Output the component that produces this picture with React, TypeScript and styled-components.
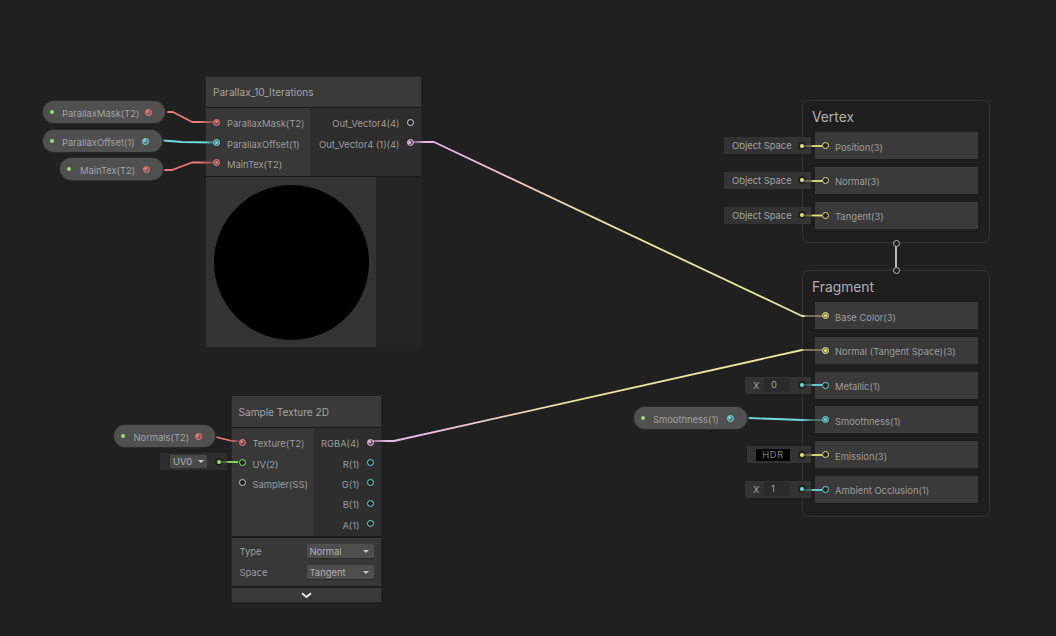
import React from 'react';
import styled, { createGlobalStyle } from 'styled-components';

const GlobalStyle = createGlobalStyle`
  html, body {
    margin: 0;
    padding: 0;
    background: #202020;
  }
  * {
    box-sizing: border-box;
  }
`;

const RED = '#f07878';
const CYAN = '#6fd8dc';
const GREEN = '#8fe26a';
const YELLOW = '#e6e27e';
const WIRE_YELLOW = '#e8e69a';
const PINK = '#e8b8e4';
const GREY = '#c8c8c8';

const Canvas = styled.div`
  position: relative;
  width: 1056px;
  height: 636px;
  overflow: hidden;
  background: #202020;
  font-family: Inter, "Liberation Sans", sans-serif;
  font-size: 9.4px;
  color: #9c9c9c;
`;

const Wires = styled.svg`
  position: absolute;
  left: 0;
  top: 0;
  z-index: 3;
  pointer-events: none;
`;

/* nodes sit on a free canvas, so their place is the content */
const Node = styled.section<{ $x: number; $y: number; $w: number }>`
  position: absolute;
  left: ${(p) => p.$x}px;
  top: ${(p) => p.$y}px;
  width: ${(p) => p.$w}px;
  background: #1c1c1c;
  box-shadow: 0 0 0 1px #242424;
  border-radius: 0 0 2px 2px;
`;

const NodeTitle = styled.header<{ $h: number }>`
  height: ${(p) => p.$h}px;
  display: flex;
  align-items: center;
  padding-left: 7px;
  background: #3a3a3a;
  font-size: 10.1px;
  color: #a4a4a4;
`;

const PortSection = styled.div<{ $left: number; $h: number }>`
  display: grid;
  grid-template-columns: ${(p) => p.$left}px minmax(0, 1fr);
  height: ${(p) => p.$h}px;
  margin-top: 1px;
`;

const PortColumn = styled.div<{ $right?: boolean }>`
  display: flex;
  flex-direction: column;
  padding: 4px 7px 0;
  background: ${(p) => (p.$right ? '#2e2e2e' : '#383838')};
  align-items: ${(p) => (p.$right ? 'flex-end' : 'flex-start')};
`;

const PortRow = styled.div<{ $right?: boolean }>`
  display: flex;
  align-items: center;
  height: 20.4px;
  gap: 7px;
  flex-direction: ${(p) => (p.$right ? 'row-reverse' : 'row')};
  white-space: nowrap;
`;

const PortLabel = styled.span`
  padding-top: 3px;
`;

const RingPort = styled.span<{ $color: string; $on?: boolean }>`
  position: relative;
  flex: none;
  width: 7px;
  height: 7px;
  border-radius: 50%;
  border: 1.2px solid ${(p) => p.$color};
  background: ${(p) => (p.$on ? `${p.$color}50` : '#222')};
  z-index: 4;

  &::after {
    content: '';
    display: ${(p) => (p.$on ? 'block' : 'none')};
    position: absolute;
    left: 0.8px;
    top: 0.8px;
    width: 3px;
    height: 3px;
    border-radius: 50%;
    background: ${(p) => p.$color};
  }
`;

const Preview = styled.div`
  display: flex;
  margin-top: 1px;
  height: 170px;
  background: #232323;
`;

const PreviewBox = styled.div`
  width: 170px;
  height: 170px;
  display: flex;
  align-items: center;
  justify-content: center;
  background: #333333;
`;

const Sphere = styled.div`
  width: 155px;
  height: 155px;
  border-radius: 50%;
  background: #000;
`;

const Controls = styled.div`
  margin-top: 2px;
  padding: 6px 7px 0 8px;
  height: 48px;
  background: #383838;
  display: flex;
  flex-direction: column;
  gap: 7px;
`;

const ControlRow = styled.div`
  display: flex;
  align-items: center;
  justify-content: space-between;
  height: 14px;
`;

const Dropdown = styled.div<{ $w: number }>`
  width: ${(p) => p.$w}px;
  height: 14px;
  padding: 0 5px 0 3px;
  display: flex;
  align-items: center;
  justify-content: space-between;
  background: #4e4e4e;
  border-radius: 2px;
  box-shadow: 0 1px 0 #2a2a2a;
  color: #adadad;
`;

const Caret = styled.span`
  width: 0;
  height: 0;
  border-left: 3px solid transparent;
  border-right: 3px solid transparent;
  border-top: 3.5px solid #c8c8c8;
`;

const Expander = styled.div`
  margin-top: 2px;
  height: 14px;
  display: flex;
  align-items: center;
  justify-content: center;
  background: #3a3a3a;
`;

const Pill = styled.div<{ $x: number; $y: number; $w: number }>`
  position: absolute;
  left: ${(p) => p.$x}px;
  top: ${(p) => p.$y}px;
  width: ${(p) => p.$w}px;
  height: 22px;
  padding: 0 13.5px 0 7px;
  border-radius: 11px;
  display: flex;
  align-items: center;
  background: #505050;
  box-shadow: 0 0 0 1px #2a2a2a;
  color: #a2a2a2;
  white-space: nowrap;
`;

const PillDot = styled.span`
  flex: none;
  width: 4px;
  height: 4px;
  border-radius: 50%;
  background: ${GREEN};
  margin-right: 6px;
`;

const PillLabel = styled.span<{ $gap?: number }>`
  margin-left: ${(p) => p.$gap ?? 2}px;
  flex: 1;
  padding-top: 3px;
`;

const MasterBlock = styled.section<{ $y: number; $h: number }>`
  position: absolute;
  left: 802px;
  top: ${(p) => p.$y}px;
  width: 188px;
  height: ${(p) => p.$h}px;
  padding: 7px 11px 0 12px;
  border: 1px solid #333333;
  border-radius: 7px;
  background: #1e1e1e;
`;

const BlockTitle = styled.h2`
  margin: 0 0 6px -3px;
  height: 18px;
  line-height: 18px;
  font-size: 13.8px;
  font-weight: 400;
  color: #b0b0b0;
`;

const BlockRows = styled.div`
  display: flex;
  flex-direction: column;
  gap: 7.8px;
`;

const BlockRow = styled.div`
  position: relative;
  height: 27px;
  display: flex;
  align-items: center;
  gap: 6px;
  padding-left: 7px;
  background: #3a3a3a;
  white-space: nowrap;
`;

const RowLabel = styled.span`
  padding-top: 3px;
`;

/* inline default values hang off the left edge of a port row */
const Inline = styled.div<{ $w: number; $color: string }>`
  position: absolute;
  right: calc(100% + 4px);
  top: 5px;
  width: ${(p) => p.$w}px;
  height: 17px;
  display: flex;
  align-items: center;
  background: #333333;
  color: #a2a2a2;
  white-space: nowrap;

  &::after {
    content: '';
    position: absolute;
    right: 7.5px;
    top: 6.5px;
    width: 4px;
    height: 4px;
    border-radius: 50%;
    background: ${(p) => p.$color};
    box-shadow: 0 0 0 2px #202020;
  }
`;

const InlineText = styled.span`
  padding-left: 8px;
`;

const AxisLabel = styled.span`
  padding-left: 8px;
  width: 19px;
`;

const NumberBox = styled.span`
  width: 26px;
  height: 14px;
  line-height: 14px;
  padding-left: 7px;
  background: #2a2a2a;
  border-radius: 2px;
  color: #a0a0a0;
`;

const HdrSwatch = styled.span`
  margin-left: 9px;
  width: 34px;
  height: 12px;
  line-height: 12px;
  text-align: center;
  background: #000;
  color: #808080;
  letter-spacing: 0.6px;
`;

const UvMenu = styled.div`
  width: 37px;
  height: 13px;
  margin-left: 10px;
  padding: 0 3px;
  display: flex;
  align-items: center;
  justify-content: space-between;
  background: #4a4a4a;
  border-radius: 1px;
  color: #adadad;
`;

const UvControl = styled.div`
  position: absolute;
  top: 453px;
  left: 160px;
  width: 67px;
  height: 17px;
  display: flex;
  align-items: center;
  background: #2e2e2e;

  &::after {
    content: '';
    position: absolute;
    right: 6px;
    top: 6.5px;
    width: 4px;
    height: 4px;
    border-radius: 50%;
    background: ${GREEN};
    box-shadow: 0 0 0 2px #202020;
  }
`;

const Joint = styled.span<{ $x: number; $y: number }>`
  position: absolute;
  left: ${(p) => p.$x - 3.5}px;
  top: ${(p) => p.$y - 3.5}px;
  width: 7px;
  height: 7px;
  border-radius: 50%;
  border: 1.2px solid #b8b8b8;
  background: #202020;
  z-index: 4;
`;

type Stop = [number, string, number?];
type Edge = { id: string; pts: number[][]; axis: [number, number]; stops: Stop[] };

const fade = (c: string, x0: number, x1: number, x2: number, x3: number, total: [number, number]): Stop[] => {
  const t = (x: number) => (x - total[0]) / (total[1] - total[0]);
  return [
    [t(x0), c, 0.35],
    [t(x1), c, 1],
    [t(x2), c, 1],
    [t(x3), c, 0.35],
  ];
};

const inlineEdge = (id: string, y: number, c: string): Edge => ({
  id,
  pts: [[804, y], [822, y]],
  axis: [804, 822],
  stops: [[0, c, 0.3], [0.4, c, 0.35], [0.45, c, 1], [1, c, 1]],
});

const edges: Edge[] = [
  { id: 'e1', pts: [[167, 112], [173, 112], [192, 122], [213, 122]], axis: [167, 213], stops: fade(RED, 167, 168, 200, 213, [167, 213]) },
  { id: 'e2', pts: [[163, 140.5], [182, 142], [213, 142.5]], axis: [163, 213], stops: fade(CYAN, 163, 165, 205, 213, [163, 213]) },
  { id: 'e3', pts: [[164, 170], [172, 170], [192, 162.5], [213, 162.5]], axis: [164, 213], stops: fade(RED, 164, 165, 200, 213, [164, 213]) },
  {
    id: 'e4',
    pts: [[413, 142], [434, 142], [802, 316], [822, 316]],
    axis: [413, 822],
    stops: [[0, PINK, 0.35], [0.03, PINK, 1], [0.1, PINK, 1], [0.45, WIRE_YELLOW, 1], [0.955, WIRE_YELLOW, 1], [0.96, WIRE_YELLOW, 0.45], [1, WIRE_YELLOW, 0.35]],
  },
  {
    id: 'e5',
    pts: [[373, 441], [394, 441], [802, 350], [822, 350]],
    axis: [373, 822],
    stops: [[0, PINK, 0.5], [0.03, PINK, 1], [0.1, PINK, 1], [0.45, WIRE_YELLOW, 1], [0.955, WIRE_YELLOW, 1], [0.96, WIRE_YELLOW, 0.45], [1, WIRE_YELLOW, 0.35]],
  },
  { id: 'e6', pts: [[216, 437], [232, 441], [238, 441]], axis: [216, 238], stops: fade(RED, 216, 217, 228, 238, [216, 238]) },
  { id: 'e7', pts: [[221, 462], [238, 462]], axis: [221, 238], stops: [[0, GREEN, 0.3], [0.35, GREEN, 0.4], [0.4, GREEN, 1], [1, GREEN, 1]] },
  { id: 'e8', pts: [[748, 418], [802, 420], [822, 420]], axis: [748, 822], stops: fade(CYAN, 748, 750, 800, 815, [748, 822]) },
  inlineEdge('e9', 146, YELLOW),
  inlineEdge('e10', 181, YELLOW),
  inlineEdge('e11', 215.5, YELLOW),
  inlineEdge('e12', 385, CYAN),
  inlineEdge('e13', 455, YELLOW),
  inlineEdge('e14', 490, CYAN),
];

const WireLayer = () => (
  <Wires width={1056} height={636} viewBox='0 0 1056 636' fill='none'>
    <defs>
      {edges.map((e) => (
        <linearGradient key={e.id} id={e.id} gradientUnits='userSpaceOnUse' x1={e.axis[0]} y1={0} x2={e.axis[1]} y2={0}>
          {e.stops.map(([o, c, a], i) => (
            <stop key={i} offset={o} stopColor={c} stopOpacity={a ?? 1} />
          ))}
        </linearGradient>
      ))}
    </defs>
    {edges.map((e) => (
      <polyline
        key={e.id}
        points={e.pts.map((p) => p.join(',')).join(' ')}
        stroke={`url(#${e.id})`}
        strokeWidth={1.8}
        strokeLinejoin='round'
      />
    ))}
    <line x1={896} y1={246} x2={896} y2={267} stroke={GREY} strokeWidth={1.8} />
  </Wires>
);

const Left = ({ label, color, on }: { label: string; color: string; on?: boolean }) => (
  <PortRow>
    <RingPort $color={color} $on={on} />
    <PortLabel>{label}</PortLabel>
  </PortRow>
);

const Right = ({ label, color, on }: { label: string; color: string; on?: boolean }) => (
  <PortRow $right>
    <RingPort $color={color} $on={on} />
    <PortLabel>{label}</PortLabel>
  </PortRow>
);

const PropertyPill = ({
  x, y, w, label, color, gap,
}: { x: number; y: number; w: number; label: string; color: string; gap?: number }) => (
  <Pill $x={x} $y={y} $w={w}>
    <PillDot />
    <PillLabel $gap={gap}>{label}</PillLabel>
    <RingPort $color={color} $on />
  </Pill>
);

const ObjectSpace = () => (
  <Inline $w={87} $color={YELLOW}>
    <InlineText>Object Space</InlineText>
  </Inline>
);

const VectorValue = ({ value }: { value: string }) => (
  <Inline $w={66} $color={CYAN}>
    <AxisLabel>X</AxisLabel>
    <NumberBox>{value}</NumberBox>
  </Inline>
);

export default function App() {
  return (
    <Canvas>
      <GlobalStyle />

      <PropertyPill x={43} y={101} w={122} label='ParallaxMask(T2)' color={RED} />
      <PropertyPill x={43} y={130} w={119} label='ParallaxOffset(1)' color={CYAN} />
      <PropertyPill x={60} y={158} w={103} label='MainTex(T2)' color={RED} gap={3} />
      <PropertyPill x={114} y={425} w={101} label='Normals(T2)' color={RED} gap={2.5} />
      <PropertyPill x={634} y={407} w={113} label='Smoothness(1)' color={CYAN} />

      <Node $x={206} $y={77} $w={214.5}>
        <NodeTitle $h={30}>Parallax_10_Iterations</NodeTitle>
        <PortSection $left={104} $h={68}>
          <PortColumn>
            <Left label='ParallaxMask(T2)' color={RED} on />
            <Left label='ParallaxOffset(1)' color={CYAN} on />
            <Left label='MainTex(T2)' color={RED} on />
          </PortColumn>
          <PortColumn $right>
            <Right label='Out_Vector4(4)' color='#e8d8ec' />
            <Right label='Out_Vector4 (1)(4)' color={PINK} on />
          </PortColumn>
        </PortSection>
        <Preview>
          <PreviewBox>
            <Sphere />
          </PreviewBox>
        </Preview>
      </Node>

      <Node $x={231.5} $y={396} $w={149}>
        <NodeTitle $h={31}>Sample Texture 2D</NodeTitle>
        <PortSection $left={82} $h={108}>
          <PortColumn>
            <Left label='Texture(T2)' color={RED} on />
            <Left label='UV(2)' color={GREEN} />
            <Left label='Sampler(SS)' color='#c8c8c8' />
          </PortColumn>
          <PortColumn $right>
            <Right label='RGBA(4)' color={PINK} on />
            <Right label='R(1)' color={CYAN} />
            <Right label='G(1)' color={CYAN} />
            <Right label='B(1)' color={CYAN} />
            <Right label='A(1)' color={CYAN} />
          </PortColumn>
        </PortSection>
        <Controls>
          <ControlRow>
            <span>Type</span>
            <Dropdown $w={67}>
              Normal
              <Caret />
            </Dropdown>
          </ControlRow>
          <ControlRow>
            <span>Space</span>
            <Dropdown $w={67}>
              Tangent
              <Caret />
            </Dropdown>
          </ControlRow>
        </Controls>
        <Expander>
          <svg width={11} height={7} viewBox='0 0 11 7' fill='none'>
            <path d='M1 1.2 L5.5 5 L10 1.2' stroke='#eeeeee' strokeWidth={1.8} />
          </svg>
        </Expander>
      </Node>

      <UvControl>
        <UvMenu>
          UV0
          <Caret />
        </UvMenu>
      </UvControl>

      <MasterBlock $y={100} $h={143}>
        <BlockTitle>Vertex</BlockTitle>
        <BlockRows>
          <BlockRow>
            <ObjectSpace />
            <RingPort $color={YELLOW} />
            <RowLabel>Position(3)</RowLabel>
          </BlockRow>
          <BlockRow>
            <ObjectSpace />
            <RingPort $color={YELLOW} />
            <RowLabel>Normal(3)</RowLabel>
          </BlockRow>
          <BlockRow>
            <ObjectSpace />
            <RingPort $color={YELLOW} />
            <RowLabel>Tangent(3)</RowLabel>
          </BlockRow>
        </BlockRows>
      </MasterBlock>

      <Joint $x={896} $y={243} />
      <Joint $x={896} $y={270} />

      <MasterBlock $y={270} $h={247}>
        <BlockTitle>Fragment</BlockTitle>
        <BlockRows>
          <BlockRow>
            <RingPort $color={YELLOW} $on />
            <RowLabel>Base Color(3)</RowLabel>
          </BlockRow>
          <BlockRow>
            <RingPort $color={YELLOW} $on />
            <RowLabel>Normal (Tangent Space)(3)</RowLabel>
          </BlockRow>
          <BlockRow>
            <VectorValue value='0' />
            <RingPort $color={CYAN} />
            <RowLabel>Metallic(1)</RowLabel>
          </BlockRow>
          <BlockRow>
            <RingPort $color={CYAN} $on />
            <RowLabel>Smoothness(1)</RowLabel>
          </BlockRow>
          <BlockRow>
            <Inline $w={64} $color={YELLOW}>
              <HdrSwatch>HDR</HdrSwatch>
            </Inline>
            <RingPort $color={YELLOW} />
            <RowLabel>Emission(3)</RowLabel>
          </BlockRow>
          <BlockRow>
            <VectorValue value='1' />
            <RingPort $color={CYAN} />
            <RowLabel>Ambient Occlusion(1)</RowLabel>
          </BlockRow>
        </BlockRows>
      </MasterBlock>

      <WireLayer />
    </Canvas>
  );
}
